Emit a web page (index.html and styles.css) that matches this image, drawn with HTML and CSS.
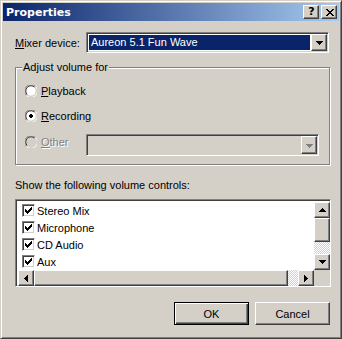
FILE: index.html
```html
<!DOCTYPE html>
<html lang="en">
<head>
    <meta charset="UTF-8">
    <meta name="viewport" content="width=device-width, initial-scale=1.0">
    <title>Properties</title>
    <link rel="stylesheet" href="styles.css">
</head>
<body>
    <div class="window">
        <div class="titlebar">
            <span class="title">Properties</span>
            <div class="caption-buttons">
                <span class="cap-btn help">?</span>
                <span class="cap-btn close">
                    <svg width="8" height="7" viewBox="0 0 8 7" shape-rendering="crispEdges">
                        <path d="M0 0h2v1h1v1h2v-1h1v-1h2v1h-1v1h-1v1h-1v1h1v1h1v1h1v1h-2v-1h-1v-1h-2v1h-1v1h-2v-1h1v-1h1v-1h1v-1h-1v-1h-1v-1h-1z" fill="#000"/>
                    </svg>
                </span>
            </div>
        </div>

        <div class="dialog">
            <div class="mixer-row">
                <label class="mixer-label"><u>M</u>ixer device:</label>
                <div class="combo mixer-combo">
                    <div class="combo-value">Aureon 5.1 Fun Wave</div>
                    <span class="raised drop-btn">
                        <svg width="7" height="4" viewBox="0 0 7 4" shape-rendering="crispEdges"><path d="M0 0h7v1h-1v1h-1v1h-1v1h-1v-1h-1v-1h-1v-1h-1z" fill="#000"/></svg>
                    </span>
                </div>
            </div>

            <div class="group">
                <span class="group-title">Adjust volume for</span>

                <div class="radio-row">
                    <svg class="radio" width="12" height="12" viewBox="0 0 12 12">
                        <circle cx="6" cy="6" r="5" fill="#fff"/>
                        <path d="M1.5 10.5 A6 6 0 0 1 10.5 1.5" stroke="#808080" stroke-width="1" fill="none" transform="translate(0 0)"/>
                        <path d="M2.3 9.7 A5 5 0 0 1 9.7 2.3" stroke="#404040" stroke-width="1" fill="none"/>
                        <path d="M10.5 1.5 A6 6 0 0 1 1.5 10.5" stroke="#fff" stroke-width="1" fill="none"/>
                        <path d="M9.7 2.3 A5 5 0 0 1 2.3 9.7" stroke="#d4d0c8" stroke-width="1" fill="none"/>
                    </svg>
                    <span class="radio-text"><u>P</u>layback</span>
                </div>

                <div class="radio-row">
                    <svg class="radio" width="12" height="12" viewBox="0 0 12 12">
                        <circle cx="6" cy="6" r="5" fill="#fff"/>
                        <path d="M1.5 10.5 A6 6 0 0 1 10.5 1.5" stroke="#808080" stroke-width="1" fill="none"/>
                        <path d="M2.3 9.7 A5 5 0 0 1 9.7 2.3" stroke="#404040" stroke-width="1" fill="none"/>
                        <path d="M10.5 1.5 A6 6 0 0 1 1.5 10.5" stroke="#fff" stroke-width="1" fill="none"/>
                        <path d="M9.7 2.3 A5 5 0 0 1 2.3 9.7" stroke="#d4d0c8" stroke-width="1" fill="none"/>
                        <rect x="4" y="5" width="4" height="2" fill="#000"/>
                        <rect x="5" y="4" width="2" height="4" fill="#000"/>
                    </svg>
                    <span class="radio-text"><u>R</u>ecording</span>
                </div>

                <div class="radio-row other-row">
                    <svg class="radio" width="12" height="12" viewBox="0 0 12 12">
                        <circle cx="6" cy="6" r="5" fill="#d4d0c8"/>
                        <path d="M1.5 10.5 A6 6 0 0 1 10.5 1.5" stroke="#808080" stroke-width="1" fill="none"/>
                        <path d="M2.3 9.7 A5 5 0 0 1 9.7 2.3" stroke="#404040" stroke-width="1" fill="none"/>
                        <path d="M10.5 1.5 A6 6 0 0 1 1.5 10.5" stroke="#fff" stroke-width="1" fill="none"/>
                        <path d="M9.7 2.3 A5 5 0 0 1 2.3 9.7" stroke="#d4d0c8" stroke-width="1" fill="none"/>
                    </svg>
                    <span class="radio-text disabled"><u>O</u>ther</span>
                    <div class="combo other-combo">
                        <div class="combo-empty"></div>
                        <span class="raised drop-btn">
                            <svg width="7" height="4" viewBox="0 0 7 4" shape-rendering="crispEdges"><path d="M0 0h7v1h-1v1h-1v1h-1v1h-1v-1h-1v-1h-1v-1h-1z" fill="#808080"/></svg>
                        </span>
                    </div>
                </div>
            </div>

            <div class="list-label">Show the following volume controls:</div>

            <div class="listbox">
                <div class="list-items">
                    <div class="list-item"><span class="check"><svg width="7" height="7" viewBox="0 0 7 7" shape-rendering="crispEdges"><path d="M0 2h1v3H0zM1 3h1v3H1zM2 4h1v3H2zM3 3h1v3H3zM4 2h1v3H4zM5 1h1v3H5zM6 0h1v3H6z" fill="#000"/></svg></span>Stereo Mix</div>
                    <div class="list-item"><span class="check"><svg width="7" height="7" viewBox="0 0 7 7" shape-rendering="crispEdges"><path d="M0 2h1v3H0zM1 3h1v3H1zM2 4h1v3H2zM3 3h1v3H3zM4 2h1v3H4zM5 1h1v3H5zM6 0h1v3H6z" fill="#000"/></svg></span>Microphone</div>
                    <div class="list-item"><span class="check"><svg width="7" height="7" viewBox="0 0 7 7" shape-rendering="crispEdges"><path d="M0 2h1v3H0zM1 3h1v3H1zM2 4h1v3H2zM3 3h1v3H3zM4 2h1v3H4zM5 1h1v3H5zM6 0h1v3H6z" fill="#000"/></svg></span>CD Audio</div>
                    <div class="list-item"><span class="check"><svg width="7" height="7" viewBox="0 0 7 7" shape-rendering="crispEdges"><path d="M0 2h1v3H0zM1 3h1v3H1zM2 4h1v3H2zM3 3h1v3H3zM4 2h1v3H4zM5 1h1v3H5zM6 0h1v3H6z" fill="#000"/></svg></span>Aux</div>
                </div>

                <div class="vscroll">
                    <span class="raised sb-btn">
                        <svg width="7" height="4" viewBox="0 0 7 4" shape-rendering="crispEdges"><path d="M3 0h1v1h1v1h1v1h1v1H0v-1h1v-1h1v-1h1z" fill="#000"/></svg>
                    </span>
                    <span class="raised v-thumb"></span>
                    <span class="track"></span>
                    <span class="raised sb-btn">
                        <svg width="7" height="4" viewBox="0 0 7 4" shape-rendering="crispEdges"><path d="M0 0h7v1h-1v1h-1v1h-1v1h-1v-1h-1v-1h-1v-1h-1z" fill="#000"/></svg>
                    </span>
                </div>

                <div class="hscroll">
                    <span class="raised sb-btn">
                        <svg width="4" height="7" viewBox="0 0 4 7" shape-rendering="crispEdges"><path d="M3 0h1v7h-1v-1h-1v-1h-1v-1h-1v-1h1v-1h1v-1h1z" fill="#000"/></svg>
                    </span>
                    <span class="raised h-thumb"></span>
                    <span class="track"></span>
                    <span class="raised sb-btn">
                        <svg width="4" height="7" viewBox="0 0 4 7" shape-rendering="crispEdges"><path d="M0 0h1v1h1v1h1v1h1v1h-1v1h-1v1h-1v1H0z" fill="#000"/></svg>
                    </span>
                </div>

                <div class="corner"></div>
            </div>

            <div class="buttons">
                <button class="btn default">OK</button>
                <button class="btn">Cancel</button>
            </div>
        </div>
    </div>
</body>
</html>
```

FILE: styles.css
```css
body {
    margin: 0;
    padding: 0;
    background-color: #d4d0c8;
    font-family: "Liberation Sans", Arial, sans-serif;
    font-size: 11px;
    color: #000;
}

.window {
    width: 342px;
    height: 339px;
    box-sizing: border-box;
    border: 1px solid;
    border-color: #d4d0c8 #404040 #404040 #d4d0c8;
    box-shadow: inset 1px 1px 0 #fff, inset -1px -1px 0 #808080;
    padding: 2px;
    background-color: #d4d0c8;
}

.titlebar {
    height: 18px;
    display: flex;
    align-items: center;
    justify-content: space-between;
    background: linear-gradient(to right, #0a246a, #a6caf0);
}

.title {
    font-family: "DejaVu Sans", Verdana, sans-serif;
    font-weight: bold;
    font-size: 11px;
    color: #fff;
    padding-left: 3px;
}

.caption-buttons {
    display: flex;
    gap: 2px;
    margin-right: 2px;
}

/* classic raised 3d edge */
.raised,
.cap-btn {
    box-sizing: border-box;
    background-color: #d4d0c8;
    border: 1px solid;
    border-color: #fff #404040 #404040 #fff;
    box-shadow: inset -1px -1px 0 #808080, inset 1px 1px 0 #d4d0c8;
    display: flex;
    align-items: center;
    justify-content: center;
}

.cap-btn {
    width: 16px;
    height: 14px;
}

.help {
    font-family: "DejaVu Sans", Verdana, sans-serif;
    font-weight: bold;
    font-size: 11px;
    line-height: 12px;
    padding-left: 1px;
}

.close svg {
    margin-left: 1px;
}

.dialog {
    padding: 11px 0 0 12px;
}

.mixer-row {
    display: flex;
    align-items: center;
    height: 21px;
}

.mixer-label {
    width: 71px;
}

/* classic sunken edge */
.combo,
.listbox {
    box-sizing: border-box;
    border: 1px solid;
    border-color: #808080 #fff #fff #808080;
    box-shadow: inset 1px 1px 0 #404040, inset -1px -1px 0 #d4d0c8;
    padding: 1px;
    display: flex;
}

.combo {
    background-color: #fff;
}

.mixer-combo {
    width: 243px;
    height: 21px;
}

.combo-value {
    flex: 1;
    margin: 1px;
    background-color: #0a246a;
    color: #fff;
    line-height: 15px;
    padding-left: 2px;
}

.drop-btn {
    width: 16px;
    height: 17px;
}

.drop-btn svg {
    margin-top: 1px;
}

.group {
    margin-top: 14px;
    width: 315px;
    height: 98px;
    box-sizing: border-box;
    border: 1px solid #808080;
    box-shadow: 1px 1px 0 #fff, inset 1px 1px 0 #fff;
}

.group-title {
    display: block;
    width: fit-content;
    height: 13px;
    line-height: 13px;
    margin: -7px 0 0 6px;
    padding: 0 1px;
    background-color: #d4d0c8;
}

.radio-row {
    display: flex;
    align-items: center;
    height: 20px;
    padding-left: 9px;
}

.radio-row:first-of-type {
    margin-top: 7px;
}

.radio-row + .radio-row {
    margin-top: 5px;
}

.radio {
    margin-right: 4px;
}

.other-row {
    align-items: flex-start;
    margin-top: 6px !important;
}

.other-row .radio {
    margin-top: 4px;
}

.other-row .radio-text {
    line-height: 20px;
}

.disabled {
    color: #808080;
    text-shadow: 1px 1px 0 #fff;
}

.other-combo {
    background-color: #d4d0c8;
    width: 233px;
    height: 22px;
    margin: 2px 10px 0 auto;
}

.combo-empty {
    flex: 1;
}

.other-combo .drop-btn {
    height: 18px;
}

.list-label {
    margin-top: 13px;
    line-height: 14px;
}

.listbox {
    margin-top: 7px;
    width: 316px;
    height: 88px;
    padding: 2px;
    background-color: #fff;
    display: grid;
    grid-template-columns: 296px 16px;
    grid-template-rows: 68px 16px;
}

.list-items {
    overflow: hidden;
}

.list-item {
    display: flex;
    align-items: center;
    height: 17px;
    padding-left: 4px;
    white-space: nowrap;
}

.check {
    box-sizing: border-box;
    width: 13px;
    height: 13px;
    margin-right: 2px;
    background-color: #fff;
    border: 1px solid;
    border-color: #808080 #fff #fff #808080;
    box-shadow: inset 1px 1px 0 #404040, inset -1px -1px 0 #d4d0c8;
    display: flex;
    align-items: center;
    justify-content: center;
}

.vscroll {
    display: flex;
    flex-direction: column;
}

.hscroll {
    display: flex;
}

.sb-btn {
    width: 16px;
    height: 16px;
    flex-shrink: 0;
}

.v-thumb {
    height: 24px;
    flex-shrink: 0;
}

.h-thumb {
    width: 254px;
    flex-shrink: 0;
}

.track {
    flex: 1;
    background-color: #fff;
    background-image: conic-gradient(#d4d0c8 25%, #fff 0 50%, #d4d0c8 0 75%, #fff 0);
    background-size: 2px 2px;
}

.corner {
    background-color: #d4d0c8;
}

.buttons {
    display: flex;
    justify-content: flex-end;
    gap: 6px;
    margin-top: 15px;
    padding-right: 9px;
}

.btn {
    box-sizing: border-box;
    width: 75px;
    height: 23px;
    font-family: "Liberation Sans", Arial, sans-serif;
    font-size: 11px;
    color: #000;
    background-color: #d4d0c8;
    border: 1px solid;
    border-color: #fff #404040 #404040 #fff;
    box-shadow: inset -1px -1px 0 #808080, inset 1px 1px 0 #d4d0c8;
    padding: 0;
}

.btn.default {
    border: 1px solid #000;
    box-shadow: inset 1px 1px 0 #fff, inset -1px -1px 0 #404040, inset -2px -2px 0 #808080;
}
```
